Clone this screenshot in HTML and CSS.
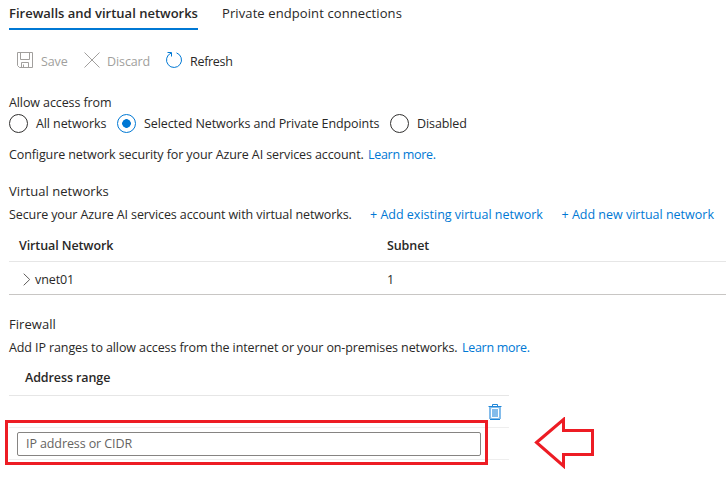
FILE: index.html
```html
<!DOCTYPE html>
<html lang="en">
<head>
<meta charset="utf-8">
<title>Firewalls and virtual networks</title>
<link rel="stylesheet" href="styles.css">
</head>
<body>
<main class="page">
  <nav class="tabs">
    <a class="tab active">Firewalls and virtual networks</a>
    <a class="tab second">Private endpoint connections</a>
  </nav>
  <div class="toolbar">
    <button class="command disabled save">
      <svg width="16" height="16" viewBox="0 0 16 16"><path d="M.5.5h15v15h-13l-2-2zM3.500 .5v7h9v-7M4.500 15.500v-5h7v5M6.500 12.500v3"/></svg>
      <span>Save</span>
    </button>
    <button class="command disabled discard">
      <svg width="16" height="16" viewBox="0 0 16 16"><path d="M.5.5l15 15M15.500.5l-15 15"/></svg>
      <span>Discard</span>
    </button>
    <button class="command refresh">
      <svg width="18" height="18" viewBox="0 0 18 18"><path d="M11.500 1.900A7.500 7.500 0 1 1 6 2.100M2.500 1.500h4v4"/></svg>
      <span>Refresh</span>
    </button>
  </div>
  <div class="line allow">Allow access from</div>
  <div class="radios">
    <label class="radio all"><i class="dot"></i><span>All networks</span></label>
    <label class="radio selected"><i class="dot"></i><span>Selected Networks and Private Endpoints</span></label>
    <label class="radio off"><i class="dot"></i><span>Disabled</span></label>
  </div>
  <p class="line configure"><span>Configure network security for your Azure AI services account.</span><a class="link more">Learn more.</a></p>

  <h2 class="line heading">Virtual networks</h2>
  <div class="line secure"><span>Secure your Azure AI services account with virtual networks.</span><a class="link existing">+ Add existing virtual network</a><a class="link new">+ Add new virtual network</a></div>
  <section class="networks">
    <div class="row head"><b>Virtual Network</b><b>Subnet</b></div>
    <div class="row data">
      <span class="vnet"><svg width="8" height="13" viewBox="0 0 8 13"><path d="M.7.7l6 5.800-6 5.800"/></svg><span>vnet01</span></span>
      <span>1</span>
    </div>
  </section>

  <h2 class="line firewall">Firewall</h2>
  <p class="line ranges-text"><span>Add IP ranges to allow access from the internet or your on-premises networks.</span><a class="link more">Learn more.</a></p>
  <section class="ranges">
    <div class="range-head"><b>Address range</b></div>
    <div class="range-delete">
      <svg width="14" height="16" viewBox="0 0 14 16"><path class="fill" d="M1 3h12v12H1z"/><path class="inner" d="M3.500 4.500h7v9h-7z"/><path class="edge" d="M.5 2.500h13M4.500 2V.5h5V2M2 15.500h10"/></svg>
    </div>
    <div class="range-input"><input type="text" placeholder="IP address or CIDR"></div>
  </section>
  <div class="highlight"></div>
  <svg class="arrow" width="60" height="52" viewBox="0 0 60 52"><path d="M2.500 25.500L29.500 2.500v11h29v24h-29V49z"/></svg>
</main>
</body>
</html>
```
FILE: styles.css
```css
* { box-sizing: border-box; }
body { margin: 0; background: #fff; color: #292827; font: 12.5px/20px "Open Sans", "Noto Sans", sans-serif; letter-spacing: -.1px; }
.page { position: relative; width: 726px; height: 482px; padding-left: 9px; overflow: hidden; white-space: nowrap; }
h2, p { margin: 0; font: inherit; }
b { font-weight: 600; }
svg { display: block; flex: none; fill: none; stroke: currentColor; }
.link { color: #0078d4; }
.more { letter-spacing: -.3px; }

.tabs { display: flex; height: 30px; font-size: 13px; letter-spacing: .1px; }
.tab { height: 30px; padding-top: 3px; }
.active { width: 189px; border-bottom: 2px solid #0078d4; font-weight: 600; letter-spacing: 0; }
.second { margin-left: 24px; }

.toolbar { display: flex; height: 63px; padding-left: 8px; }
.command { display: flex; align-items: flex-start; height: 24px; margin: 20px 0 0; padding: 0; border: 0; background: none; color: inherit; font: inherit; letter-spacing: -.1px; }
.command span { padding-top: 2px; }
.command svg { margin-top: 2px; }
.command.disabled { color: #a19f9d; }
.save { width: 67px; gap: 8px; }
.discard { width: 81px; gap: 7px; }
.refresh { gap: 7px; }
.command.refresh { letter-spacing: -.3px; }
.command.refresh svg { color: #0078d4; margin-top: 1px; }

.line { height: 20px; display: flex; }
.radios { display: flex; height: 20px; align-items: center; }
.radio { display: flex; align-items: center; gap: 8px; }
.radio span { padding-top: 1px; }
.all { width: 108px; }
.selected { width: 273px; }
.dot { width: 19px; height: 19px; flex: none; border: 1px solid #323130; border-radius: 50%; }
.selected .dot { border-color: #0078d4; background: radial-gradient(circle, #0078d4 4px, transparent 4.6px); }
.configure { margin-top: 12px; }
.configure span { width: 359px; }
.heading, .firewall { font-size: 13px; letter-spacing: .05px; }
.heading { margin-top: 16px; }
.secure { margin-top: 4px; }
.secure span { width: 361px; }
.secure .link { letter-spacing: 0; }
.existing { width: 191.500px; }

.networks { margin-top: 8px; }
.row { display: grid; grid-template-columns: 368px 1fr; padding-left: 10px; }
.head { height: 29px; padding-top: 3px; border-bottom: 1px solid #e6e6e6; }
.data { height: 33px; padding-top: 8px; border-bottom: 1px solid #c8c6c4; }
.vnet { display: flex; align-items: center; gap: 4px; padding-left: 4px; height: 20px; }
.vnet svg { color: #605e5c; margin-top: -2px; }

.firewall { margin-top: 19px; }
.ranges-text { margin-top: 4px; }
.ranges-text span { width: 453px; }
.ranges { width: 500px; margin-top: 8px; }
.range-head { height: 30px; padding: 2px 0 0 16px; border-bottom: 1px solid #e6e6e6; }
.range-delete { display: flex; justify-content: flex-end; height: 32px; padding: 8px 7px 0 0; border-bottom: 1px solid #eee; }
.range-delete .fill { fill: #83bceb; stroke: none; }
.range-delete .inner { fill: #83bceb; stroke: #fff; }
.range-delete .edge { stroke: #1f86d8; }
.range-input { height: 32px; padding: 4px 0 0 8px; border-bottom: 1px solid #eee; }
input { display: block; width: 464px; height: 24px; margin: 0; padding: 0 8px 1px; border: 1px solid #868482; border-radius: 2px; font: inherit; letter-spacing: -.1px; }
input::placeholder { color: #666462; opacity: 1; }
.highlight { position: absolute; left: 5px; top: 420px; width: 483px; height: 45px; border: 3px solid #ed1c24; }
.arrow { position: absolute; left: 534px; top: 417px; color: #ed1c24; stroke-width: 3; }
```
